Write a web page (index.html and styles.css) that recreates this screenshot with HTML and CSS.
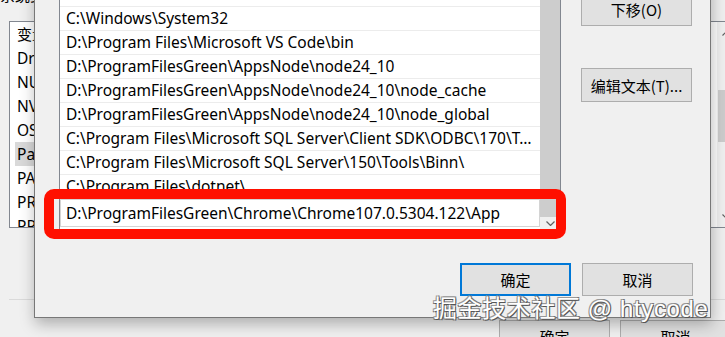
FILE: index.html
```html
<!DOCTYPE html>
<html lang="zh-CN">
  <head>
    <meta charset="UTF-8" />
    <title>编辑环境变量</title>
    <link rel="stylesheet" href="styles.css">
  </head>
  <body>
    <div class="desktop">
      <div class="env-window">
        <div class="env-label">系统变量(S)</div>
        <div class="var-list">
          <div class="var-rows">
            <div class="var-head">变量</div>
            <div class="var-row">DriverData</div>
            <div class="var-row">NUMBER_OF_PROCESSORS</div>
            <div class="var-row">NVM_HOME</div>
            <div class="var-row">OS</div>
            <div class="var-row selected">Path</div>
            <div class="var-row">PATHEXT</div>
            <div class="var-row">PROCESSOR_ARCHITECTURE</div>
            <div class="var-row">PROCESSOR_IDENTIFIER</div>
          </div>
          <div class="scrollbar">
            <span class="arrow">
              <svg width="9" height="5" viewBox="0 0 9 5"><polyline points="0.5,4.5 4.5,0.5 8.5,4.5" /></svg>
            </span>
            <div class="track"><div class="thumb"></div></div>
            <span class="arrow">
              <svg width="9" height="5" viewBox="0 0 9 5"><polyline points="0.5,0.5 4.5,4.5 8.5,0.5" /></svg>
            </span>
          </div>
        </div>
        <div class="env-sep"></div>
        <div class="env-buttons">
          <button class="btn">确定</button>
          <button class="btn">取消</button>
        </div>
      </div>
      <!-- .env-window -->

      <div class="dialog">
        <div class="dialog-body">
          <div class="path-list">
            <div class="path-rows">
              <div class="path-row">C:\Android</div>
              <div class="path-row">C:\Windows\System32</div>
              <div class="path-row">D:\Program Files\Microsoft VS Code\bin</div>
              <div class="path-row">D:\ProgramFilesGreen\AppsNode\node24_10</div>
              <div class="path-row">D:\ProgramFilesGreen\AppsNode\node24_10\node_cache</div>
              <div class="path-row">D:\ProgramFilesGreen\AppsNode\node24_10\node_global</div>
              <div class="path-row">C:\Program Files\Microsoft SQL Server\Client SDK\ODBC\170\Tools\Binn\</div>
              <div class="path-row">C:\Program Files\Microsoft SQL Server\150\Tools\Binn\</div>
              <div class="path-row">C:\Program Files\dotnet\</div>
              <div class="path-edit">D:\ProgramFilesGreen\Chrome\Chrome107.0.5304.122\App</div>
            </div>
            <div class="path-scroll">
              <div class="thumb"></div>
              <span class="arrow">
                <svg width="9" height="5" viewBox="0 0 9 5"><polyline points="0.5,0.5 4.5,4.5 8.5,0.5" /></svg>
              </span>
            </div>
          </div>
          <div class="side-buttons">
            <button class="btn">下移(O)</button>
            <button class="btn">编辑文本(T)...</button>
          </div>
        </div>
        <div class="dialog-footer">
          <button class="btn default">确定</button>
          <button class="btn">取消</button>
        </div>
      </div>
      <!-- .dialog -->

      <div class="callout"></div>
      <div class="watermark">掘金技术社区 @ htycode</div>
    </div>
  </body>
</html>
```

FILE: styles.css
```css
*,
*::before,
*::after {
  box-sizing: border-box;
  padding: 0;
  margin: 0;
}

body {
  width: 725px;
  height: 337px;
  overflow: hidden;
  background-color: #f0f0f0;
  color: #000;
  font-family: 'Noto Sans', 'Noto Sans CJK SC', sans-serif;
  font-size: 15.5px;
}

.desktop {
  position: relative;
  width: 725px;
  height: 337px;
  overflow: hidden;
}

.btn {
  width: 111px;
  height: 33px;
  background-color: #e1e1e1;
  border: 1px solid #adadad;
  color: #000;
  font-family: 'Noto Sans CJK SC', sans-serif;
  font-size: 15px;
}

.btn.default {
  border: 2px solid #0078d7;
}

.arrow {
  display: flex;
  justify-content: center;
  align-items: center;
}

.arrow svg {
  fill: none;
  stroke: #606060;
  stroke-width: 1.2;
}

/* back window */
.env-window {
  position: absolute;
  left: 0;
  top: -15px;
  width: 745px;
  height: 380px;
  display: flex;
  flex-direction: column;
  padding-left: 9px;
}

.env-label {
  margin-left: -9px;
  height: 20px;
  line-height: 20px;
  font-family: 'Noto Sans CJK SC', sans-serif;
  font-size: 15px;
}

.var-list {
  margin-top: 16px;
  width: 727px;
  height: 207px;
  display: flex;
  background-color: #fff;
  border: 1px solid #828790;
  overflow: hidden;
}

.var-rows {
  flex: 1;
}

.var-head,
.var-row {
  height: 24px;
  line-height: 24px;
  padding-left: 7px;
  white-space: nowrap;
}

.var-head {
  font-family: 'Noto Sans CJK SC', sans-serif;
  font-size: 15px;
}

.var-row.selected {
  width: 220px;
  margin-left: 5px;
  padding-left: 2px;
  background-color: #d9d9d9;
}

.scrollbar {
  width: 18px;
  display: flex;
  flex-direction: column;
  background-color: #f0f0f0;
}

.scrollbar .arrow {
  height: 22px;
}

.scrollbar .track {
  flex: 1;
}

.scrollbar .thumb {
  margin: 46px 1px 0;
  height: 52px;
  background-color: #cdcdcd;
}

.env-sep {
  margin-top: 71px;
  height: 1px;
  background-color: #dadada;
}

.env-buttons {
  display: flex;
  gap: 10px;
  margin-top: 20px;
  padding-left: 490px;
}

/* front dialog */
.dialog {
  position: absolute;
  left: 34px;
  top: -60px;
  width: 677px;
  height: 378px;
  display: flex;
  flex-direction: column;
  background-color: #f0f0f0;
  border: 1px solid #777;
  box-shadow: 1px 6px 14px rgba(0, 0, 0, 0.28);
}

.dialog-body {
  display: flex;
  align-items: flex-start;
  gap: 20px;
  padding: 41px 0 0 24px;
}

.path-list {
  width: 502px;
  height: 251px;
  display: flex;
  background-color: #fff;
  border: 1px solid #828790;
  overflow: hidden;
}

.path-rows {
  width: 480px;
}

.path-row {
  height: 24px;
  line-height: 23px;
  padding: 0 4px 0 6px;
  border-bottom: 1px solid #ececec;
  white-space: nowrap;
  overflow: hidden;
  text-overflow: ellipsis;
}

.path-edit {
  height: 28px;
  line-height: 26px;
  padding-left: 5px;
  border: 1px solid #d4d4d4;
  white-space: nowrap;
}

.path-scroll {
  width: 20px;
  display: flex;
  flex-direction: column;
  background-color: #f0f0f0;
}

.path-scroll .thumb {
  height: 234px;
  background-color: #cdcdcd;
}

.path-scroll .arrow {
  height: 15px;
  align-items: flex-start;
  padding-top: 4px;
}

.side-buttons {
  display: flex;
  flex-direction: column;
  gap: 42px;
  margin-top: 10px;
}

.side-buttons .btn {
  height: 34px;
}

.dialog-footer {
  margin-top: auto;
  display: flex;
  justify-content: flex-end;
  gap: 11px;
  padding: 0 17px 21px 0;
}

/* overlays */
.callout {
  position: absolute;
  left: 44px;
  top: 189px;
  width: 522px;
  height: 50px;
  border: 10px solid #ff1000;
  border-radius: 10px;
}

.watermark {
  position: absolute;
  left: 433px;
  top: 295px;
  font-family: 'Liberation Sans', 'Noto Sans CJK SC', sans-serif;
  font-size: 24px;
  line-height: 28px;
  letter-spacing: 0.6px;
  color: #fff;
  white-space: nowrap;
  text-shadow: 1px 1px 0 #555, -1px -1px 0 #999, 1px -1px 0 #777,
    -1px 1px 0 #777;
}
```
